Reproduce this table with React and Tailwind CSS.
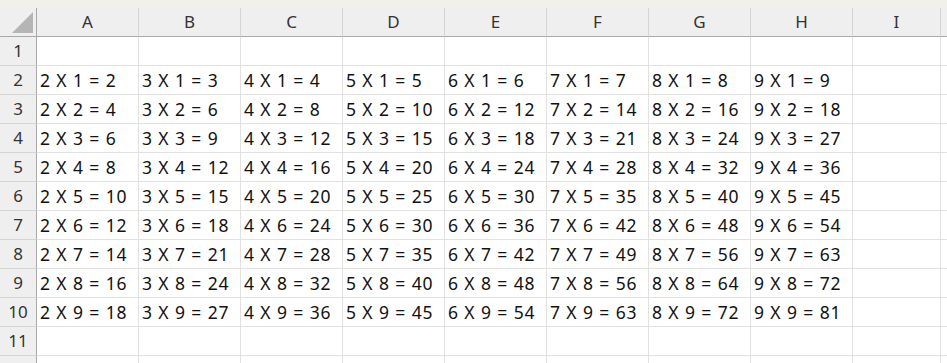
import React from "react";

const cols = ["A", "B", "C", "D", "E", "F", "G", "H", "I"];
const font = { fontFamily: '"Noto Sans", "Open Sans", sans-serif' };

function cellText(r, c) {
  if (r < 2 || r > 10 || c > 7) return "";
  const a = c + 2;
  const b = r - 1;
  return `${a} X ${b} = ${a * b}`;
}

export default function App() {
  const rows = [1, 2, 3, 4, 5, 6, 7, 8, 9, 10, 11, 12];
  return (
    <div className="w-[947px] h-[363px] overflow-hidden bg-white" style={font}>
      <div className="h-[8px] bg-[#f3f0ec]" />
      <div className="grid grid-cols-[37px_repeat(8,102px)_88px_1fr]">
        <div className="h-[29px] bg-[#efefef] border-r border-b border-[#a9a9a9] flex items-center justify-end pr-[3px]">
          <svg width="21" height="21" viewBox="0 0 21 21">
            <polygon points="21,0 21,21 0,21" fill="#b5b5b5" />
          </svg>
        </div>
        {cols.map((c) => (
          <div
            key={c}
            className="h-[29px] bg-[#efefef] border-r border-r-[#d4d4d4] border-b border-b-[#a9a9a9] flex items-center justify-center text-[17px] text-[#333]"
          >
            {c}
          </div>
        ))}
        <div className="h-[29px] bg-[#efefef] border-b border-b-[#a9a9a9]" />
        {rows.map((r) => (
          <React.Fragment key={r}>
            <div className="h-[29px] bg-[#efefef] border-r border-r-[#a9a9a9] border-b border-b-[#d4d4d4] flex items-center justify-center text-[17px] text-[#333]">
              {r <= 11 ? r : ""}
            </div>
            {cols.map((c, ci) => (
              <div
                key={c}
                className="h-[29px] border-r border-b border-[#e1e1e1] flex items-center pl-[3px] text-[17.5px] tracking-[0.9px] text-[#111] whitespace-nowrap overflow-hidden"
              >
                {cellText(r, ci)}
              </div>
            ))}
            <div className="h-[29px] border-b border-[#e1e1e1]" />
          </React.Fragment>
        ))}
      </div>
    </div>
  );
}
